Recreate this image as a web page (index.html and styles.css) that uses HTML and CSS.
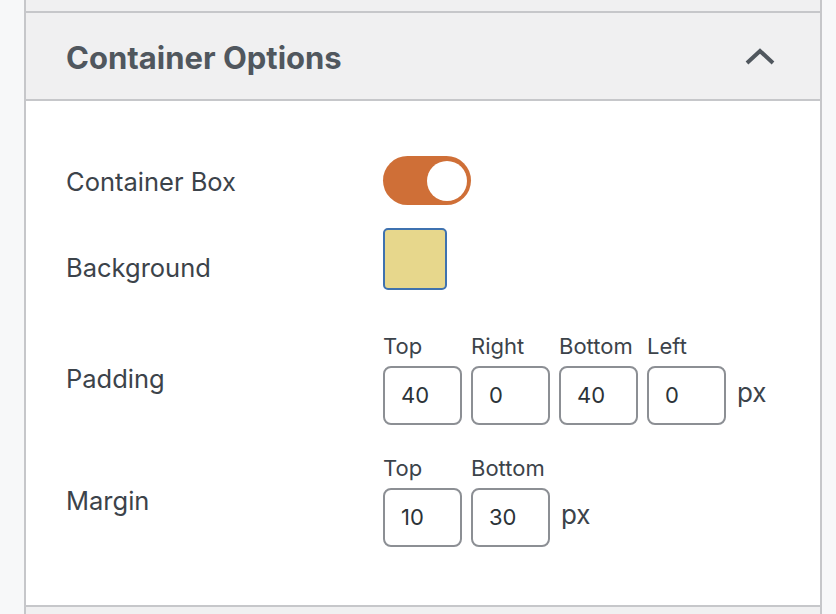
FILE: index.html
```html
<!DOCTYPE html>
<html>
<head>
<meta charset="utf-8">
<link rel="stylesheet" href="styles.css">
</head>
<body>
<div class="page">
  <div class="panel">
    <div class="prev-header"></div>
    <div class="section-header">
      <h2 class="section-title">Container Options</h2>
      <svg class="chevron" width="32" height="20" viewBox="0 0 32 20" aria-hidden="true">
        <polyline points="3,16 16,4 29,16" fill="none" stroke="#50575e" stroke-width="4" stroke-linejoin="miter" stroke-linecap="butt"/>
      </svg>
    </div>
    <div class="section-body">
      <div class="row row-toggle">
        <div class="label">Container Box</div>
        <div class="control"><span class="toggle"><span class="knob"></span></span></div>
      </div>
      <div class="row row-bg">
        <div class="label label-bg">Background</div>
        <div class="control"><span class="swatch"></span></div>
      </div>
      <div class="row row-padding">
        <div class="label">Padding</div>
        <div class="control fields">
          <div class="field"><div class="field-label">Top</div><div class="input">40</div></div>
          <div class="field"><div class="field-label">Right</div><div class="input">0</div></div>
          <div class="field"><div class="field-label">Bottom</div><div class="input">40</div></div>
          <div class="field"><div class="field-label">Left</div><div class="input">0</div></div>
          <div class="unit">px</div>
        </div>
      </div>
      <div class="row row-margin">
        <div class="label">Margin</div>
        <div class="control fields">
          <div class="field"><div class="field-label">Top</div><div class="input">10</div></div>
          <div class="field"><div class="field-label">Bottom</div><div class="input">30</div></div>
          <div class="unit">px</div>
        </div>
      </div>
    </div>
    <div class="next-header"></div>
  </div>
</div>
</body>
</html>
```
FILE: styles.css
```css
* { box-sizing: border-box; }
html, body { margin: 0; padding: 0; }
body {
  background: #f7f8f9;
  font-family: Inter, "Noto Sans", "Liberation Sans", sans-serif;
  color: #3c434a;
  width: 836px;
  height: 614px;
  overflow: hidden;
}
.page {
  padding-left: 24px;
  width: 822px;
}
.panel {
  border-left: 2px solid #c6c7ca;
  border-right: 2px solid #c6c7ca;
  background: #fff;
}
.prev-header {
  height: 13px;
  background: #f0f0f1;
  border-bottom: 2px solid #c6c7ca;
}
.section-header {
  height: 88px;
  background: #f0f0f1;
  border-bottom: 2px solid #c6c7ca;
  display: flex;
  align-items: center;
  justify-content: space-between;
  padding: 0 44px 0 40px;
}
.section-title {
  margin: 3px 0 0 0;
  font-size: 31px;
  font-weight: 700;
  color: #50575e;
  letter-spacing: 0;
}
.chevron { display: block; margin-top: 2px; }
.section-body {
  padding: 55px 0 58px 40px;
}
.row {
  display: grid;
  grid-template-columns: 317px auto;
  align-items: center;
}
.label {
  font-size: 25.5px;
  line-height: 32px;
  padding-top: 3px;
}
.row-bg { margin-top: 23px; }
.label-bg { margin-top: 15px; }
.row-padding { margin-top: 43px; }
.row-margin { margin-top: 30px; }
.row-padding .label, .row-margin .label { padding-top: 0; }
.toggle {
  display: flex;
  justify-content: flex-end;
  align-items: center;
  width: 88px;
  height: 49px;
  border-radius: 25px;
  background: #cf6f37;
  padding: 0 4px;
}
.knob {
  width: 40px;
  height: 40px;
  border-radius: 50%;
  background: #fff;
}
.swatch {
  display: block;
  width: 64px;
  height: 62px;
  background: #e7d78c;
  border: 2px solid #3f72af;
  border-radius: 5px;
}
.fields {
  display: flex;
  align-items: flex-end;
  gap: 9px;
}
.field { display: flex; flex-direction: column; gap: 7px; }
.field-label {
  font-size: 22px;
  line-height: 26px;
  color: #3c434a;
}
.input {
  width: 79px;
  height: 59px;
  border: 2px solid #8c8f94;
  border-radius: 8px;
  padding-left: 16px;
  font-size: 22px;
  line-height: 55px;
  color: #2c3338;
}
.unit {
  font-size: 26px;
  line-height: 54px;
  height: 59px;
  margin-left: 2px;
  color: #3c434a;
}
.next-header {
  height: 12px;
  background: #f0f0f1;
  border-top: 2px solid #c6c7ca;
}
```
